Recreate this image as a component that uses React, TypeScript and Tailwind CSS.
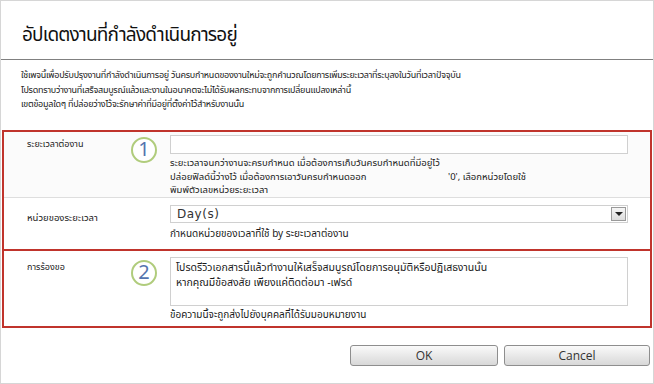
const font = { fontFamily: '"Noto Sans Thai", "Noto Sans", Tahoma, sans-serif' };

function Step({ n }: { n: string }) {
  return (
    <div className="w-[26px] h-[26px] rounded-full border-2 border-[#b0cc7c] bg-white flex items-center justify-center text-[20px] leading-none text-[#5474ae]">
      {n}
    </div>
  );
}

export default function App() {
  return (
    <div
      className="w-[654px] h-[384px] bg-white border border-[#d6d6d6] text-[#1a1a1a] overflow-hidden flex flex-col"
      style={font}
    >
      <div className="h-[59px] shrink-0 border-b border-[#808080] px-[21px] flex items-end pb-[8px]">
        <h1 className="text-[19px] leading-[30px] tracking-[-0.8px] text-[#111]">อัปเดตงานที่กำลังดำเนินการอยู่</h1>
      </div>

      <div className="px-[20px] pt-[8px] text-[9px] leading-[14.5px] tracking-[-0.25px] h-[70px] shrink-0">
        <p>ใช้เพจนี้เพื่อปรับปรุงงานที่กำลังดำเนินการอยู่ วันครบกำหนดของงานใหม่จะถูกคำนวณโดยการเพิ่มระยะเวลาที่ระบุลงในวันที่เวลาปัจจุบัน</p>
        <p>โปรดทราบว่างานที่เสร็จสมบูรณ์แล้วและงานในอนาคตจะไม่ได้รับผลกระทบจากการเปลี่ยนแปลงเหล่านี้</p>
        <p>เขตข้อมูลใดๆ ที่ปล่อยว่างไว้จะรักษาค่าที่มีอยู่ที่ตั้งค่าไว้สำหรับงานนั้น</p>
      </div>

      <div className="mx-[1px] border-2 border-[#c0342c] shrink-0">
        <div className="h-[66px] flex border-b border-[#dedede] bg-[#fbfbfb]">
          <div className="w-[166px] shrink-0 pl-[23px] pt-[4px] flex justify-between pr-[13px]">
            <span className="text-[9px] leading-[16px]">ระยะเวลาต่องาน</span>
            <div className="pt-[1px]">
              <Step n="1" />
            </div>
          </div>
          <div className="flex-1 pt-[3px] pr-[22px]">
            <div className="h-[19px] border border-[#d0d0d0] bg-white" />
            <div className="text-[9.5px] leading-[13.5px] mt-[3px]">
              <p>ระยะเวลาจนกว่างานจะครบกำหนด เมื่อต้องการเก็บวันครบกำหนดที่มีอยู่ไว้</p>
              <p className="flex">
                <span className="w-[278px] shrink-0">ปล่อยฟิลด์นี้ว่างไว้ เมื่อต้องการเอาวันครบกำหนดออก</span>
                <span>'0', เลือกหน่วยโดยใช้</span>
              </p>
              <p>พิมพ์ตัวเลขหน่วยระยะเวลา</p>
            </div>
          </div>
        </div>
        <div className="h-[51px] flex">
          <div className="w-[166px] shrink-0 pl-[23px] pt-[6px]">
            <span className="text-[9.5px] leading-[16px]">หน่วยของระยะเวลา</span>
          </div>
          <div className="flex-1 pt-[7px] pr-[22px]">
            <div className="h-[18px] border border-[#d0d0d0] bg-white flex items-center justify-between pl-[6px] pr-[1px]">
              <span className="text-[12px] tracking-[0.5px] text-[#333]" style={{ fontFamily: '"DejaVu Sans", sans-serif' }}>Day(s)</span>
              <div className="w-[15px] h-[14px] border border-[#9a9a9a] bg-gradient-to-b from-[#f6f6f6] to-[#dcdcdc] flex items-center justify-center">
                <div className="w-0 h-0 border-l-[4px] border-r-[4px] border-t-[4px] border-l-transparent border-r-transparent border-t-[#222]" />
              </div>
            </div>
            <p className="text-[10px] leading-[14px] mt-[4px]">กำหนดหน่วยของเวลาที่ใช้ by ระยะเวลาต่องาน</p>
          </div>
        </div>
      </div>

      <div className="mx-[1px] border-2 border-t-0 border-[#c0342c] h-[77px] flex shrink-0">
        <div className="w-[166px] shrink-0 pl-[23px] pt-[8px] flex justify-between pr-[13px]">
          <span className="text-[9px] leading-[16px]">การร้องขอ</span>
          <div className="pt-[1px]">
            <Step n="2" />
          </div>
        </div>
        <div className="flex-1 pt-[6px] pr-[22px]">
          <div className="h-[49px] border border-[#d0d0d0] bg-white px-[5px] pt-[3px] text-[10.5px] leading-[14.5px]">
            <p>โปรดรีวิวเอกสารนี้แล้วทำงานให้เสร็จสมบูรณ์โดยการอนุมัติหรือปฏิเสธงานนั้น</p>
            <p>หากคุณมีข้อสงสัย เพียงแค่ติดต่อมา -เฟรด์</p>
          </div>
          <p className="text-[10px] leading-[14px] mt-[2px]">ข้อความนี้จะถูกส่งไปยังบุคคลที่ได้รับมอบหมายงาน</p>
        </div>
      </div>

      <div className="flex justify-end gap-[6px] pr-[3px] pt-[17px]">
        <button className="w-[148px] h-[21px] rounded-[3px] border border-[#8e8e8e] bg-gradient-to-b from-[#fafafa] to-[#d8d8d8] text-[12px] text-[#333]" style={{ fontFamily: '"Open Sans", sans-serif' }}>
          OK
        </button>
        <button className="w-[146px] h-[21px] rounded-[3px] border border-[#8e8e8e] bg-gradient-to-b from-[#fafafa] to-[#d8d8d8] text-[12px] text-[#333]" style={{ fontFamily: '"Open Sans", sans-serif' }}>
          Cancel
        </button>
      </div>
    </div>
  );
}
